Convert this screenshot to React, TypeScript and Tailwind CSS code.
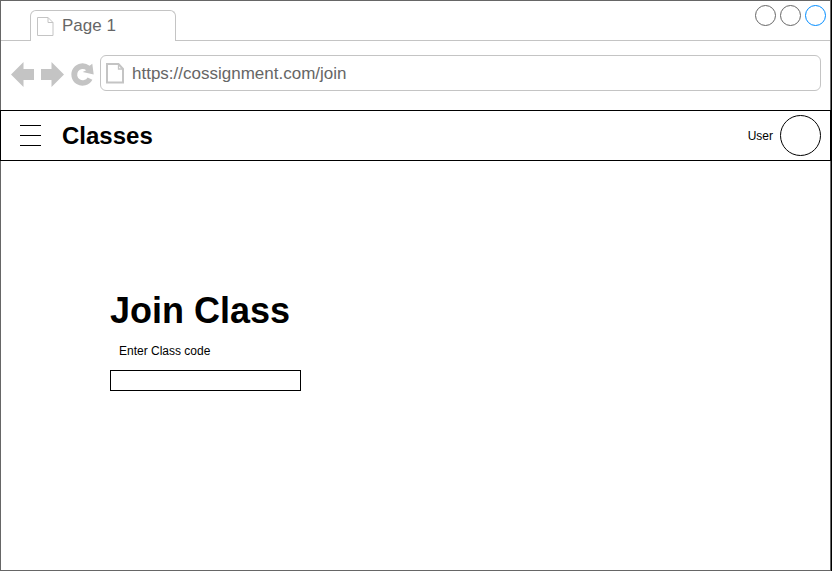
function TabBar() {
  return (
    <div className="flex h-10 items-end">
      <div className="h-10 w-[29px] border-b border-[#c4c4c4]" />
      <div className="flex h-[31px] w-[146px] items-center rounded-t-[6px] border border-b-0 border-[#c4c4c4] pl-1.5">
        <svg width="17" height="20" viewBox="0 0 17 20" fill="none" stroke="#c4c4c4" className="mt-0.5">
          <path d="M.5.5H11L16 5.5V18.5H.5ZM11 .5V5.5H16" />
        </svg>
        <span className="ml-2 text-[17px] leading-5 text-[#666]">Page 1</span>
      </div>
      <div className="flex h-10 flex-1 justify-end border-b border-[#c4c4c4]">
        <svg width="77" height="30" viewBox="0 0 77 30" fill="none" stroke="#666">
          <circle cx="12.5" cy="14.5" r="10" />
          <circle cx="37.5" cy="14.5" r="10" />
          <circle cx="62.5" cy="14.5" r="10" stroke="#008cff" />
        </svg>
      </div>
    </div>
  );
}

function AddressBar() {
  return (
    <div className="flex h-[69px] pt-[14px] pl-[10px]">
      <svg width="84" height="36" viewBox="11 55 84 36" fill="#c4c4c4" className="shrink-0">
        <path d="M11 74.5L23.5 62V69H34V80H23.5V87Z" />
        <path d="M64 74.5L51.5 62V69H41V80H51.5V87Z" />
        <path d="M92.3 63.7L93.7 74.5L82.7 72L86.2 70.2A5.6 5.6 0 1 0 87.6 77.4L92.4 79.8A11.2 11.2 0 1 1 89.6 65.8Z" />
      </svg>
      <div className="ml-[5px] flex h-9 w-[721px] items-center rounded-[6px] border border-[#c4c4c4] pl-[5px]">
        <svg width="19" height="21" viewBox="0 0 19 21" fill="none" stroke="#c4c4c4" strokeWidth="2">
          <path d="M1 1H12.5L17 6V19.5H1Z" />
          <path d="M12.5 1V6H17" strokeWidth="1.3" />
        </svg>
        <span className="mt-0.5 ml-[7px] text-[17px] leading-5 text-[#666]">https://cossignment.com/join</span>
      </div>
    </div>
  );
}

function Header() {
  return (
    <header className="-ml-px flex h-[51px] w-[831px] items-center border border-black">
      <div className="ml-[19px] flex w-[21px] flex-col gap-[9px]">
        <div className="h-px bg-black" />
        <div className="h-px bg-black" />
        <div className="h-px bg-black" />
      </div>
      <h1 className="ml-[21px] text-2xl leading-7 font-bold">Classes</h1>
      <span className="ml-auto text-xs">User</span>
      <svg width="43" height="43" viewBox="0 0 43 43" fill="none" stroke="black" className="mr-2 ml-1.5">
        <circle cx="21.5" cy="21.5" r="20" />
      </svg>
    </header>
  );
}

export default function App() {
  return (
    <div className="h-[571px] w-[832px] bg-black pr-px font-['Liberation_Sans',Arial,sans-serif] text-black">
      <div className="h-[571px] w-[831px] border border-[#666] bg-white">
        <TabBar />
        <AddressBar />
        <Header />
        <main className="flex flex-col pt-[129px] pl-[109px]">
          <h2 className="text-[36px] leading-[42px] font-bold">Join Class</h2>
          <label htmlFor="code" className="mt-[11px] ml-[9px] text-xs leading-4">
            Enter Class code
          </label>
          <input id="code" className="mt-[11px] h-[21px] w-[191px] border border-black px-1 text-xs outline-none" />
        </main>
      </div>
    </div>
  );
}
